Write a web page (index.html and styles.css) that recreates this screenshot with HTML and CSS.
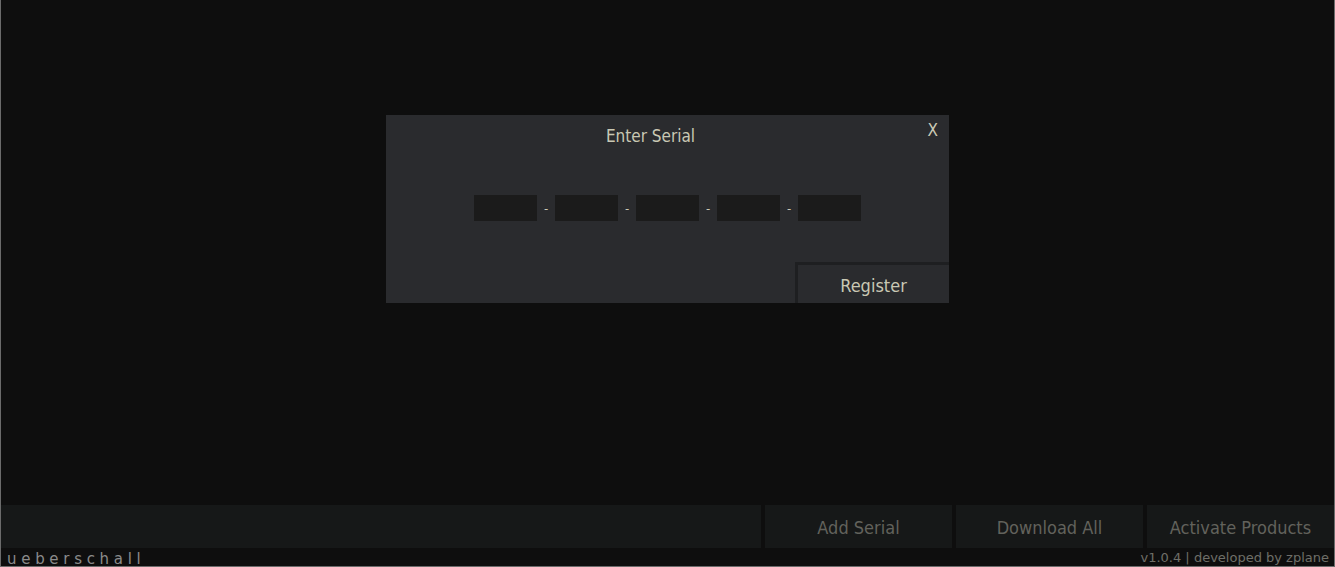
FILE: index.html
```html
<!DOCTYPE html>
<html lang="en">

<head>
  <meta charset="UTF-8">
  <meta name="viewport" content="width=device-width, initial-scale=1.0">
  <title>Enter Serial</title>
  <link rel="stylesheet" href="styles.css">
</head>

<body>
  <div class="app">
    <main class="app__main">
      <div class="dialog">
        <div class="dialog__title">Enter Serial</div>
        <button class="dialog__close">X</button>
        <div class="serial">
          <input class="serial__field" type="text">
          <span class="serial__dash">-</span>
          <input class="serial__field" type="text">
          <span class="serial__dash">-</span>
          <input class="serial__field" type="text">
          <span class="serial__dash">-</span>
          <input class="serial__field" type="text">
          <span class="serial__dash">-</span>
          <input class="serial__field" type="text">
        </div>
        <div class="dialog__footer">
          <button class="dialog__register">Register</button>
        </div>
      </div>
    </main>
    <div class="toolbar">
      <div class="toolbar__space"></div>
      <button class="toolbar__btn">Add Serial</button>
      <button class="toolbar__btn">Download All</button>
      <button class="toolbar__btn">Activate Products</button>
    </div>
    <footer class="footer">
      <span class="footer__brand">ueberschall</span>
      <span class="footer__version">v1.0.4 | developed by zplane</span>
    </footer>
  </div>
</body>

</html>
```

FILE: styles.css
```css
* {
  margin: 0;
  padding: 0;
  box-sizing: border-box;
}

body {
  background-color: #0e0e0e;
  font-family: 'DejaVu Sans Condensed', 'DejaVu Sans', sans-serif;
}

button,
input {
  font-family: inherit;
  border: none;
  outline: none;
}

.app {
  height: 567px;
  display: flex;
  flex-direction: column;
  border: 1px solid #6b6b6b;
  border-top: none;
  background-color: #0e0e0e;
}

.app__main {
  flex: 1;
  display: flex;
  justify-content: center;
  align-items: flex-start;
  padding-top: 115px;
}

/* DIALOG */
.dialog {
  position: relative;
  width: 563px;
  height: 188px;
  display: flex;
  flex-direction: column;
  background-color: #2a2b2e;
}

.dialog__title {
  padding-top: 11px;
  padding-right: 34px;
  font-size: 17px;
  line-height: 20px;
  text-align: center;
  color: #c9c8b4;
}

.dialog__close {
  position: absolute;
  top: 5px;
  right: 11px;
  background: none;
  font-size: 17px;
  line-height: 20px;
  color: #c9c8b4;
}

.serial {
  display: flex;
  align-items: center;
  justify-content: center;
  margin-top: 49px;
  height: 26px;
}

.serial__field {
  width: 63px;
  height: 26px;
  background-color: #1b1b1b;
}

.serial__dash {
  width: 18px;
  text-align: center;
  font-size: 13px;
  color: #c9c8b4;
}

.dialog__footer {
  margin-top: auto;
  display: flex;
  justify-content: flex-end;
}

.dialog__register {
  width: 154px;
  height: 41px;
  padding-top: 2px;
  border-top: 3px solid #1e1f21;
  border-left: 3px solid #1e1f21;
  background-color: #2a2b2e;
  font-size: 18px;
  color: #c9c8b4;
}

/* TOOLBAR */
.toolbar {
  height: 43px;
  display: flex;
  gap: 4px;
}

.toolbar__space {
  flex: 1;
  background-color: #161818;
}

.toolbar__btn {
  width: 187px;
  padding-top: 2px;
  background-color: #161818;
  font-size: 18px;
  color: #62625c;
}

/* FOOTER */
.footer {
  height: 18px;
  display: flex;
  justify-content: space-between;
  align-items: flex-end;
  padding: 0 5px 0 6px;
}

.footer__brand {
  font-family: 'DejaVu Sans', sans-serif;
  font-size: 15px;
  line-height: 13px;
  letter-spacing: 4.7px;
  color: #8a8a8a;
}

.footer__version {
  font-family: 'DejaVu Sans', sans-serif;
  font-size: 13px;
  line-height: 17px;
  color: #6e6e68;
}
```
